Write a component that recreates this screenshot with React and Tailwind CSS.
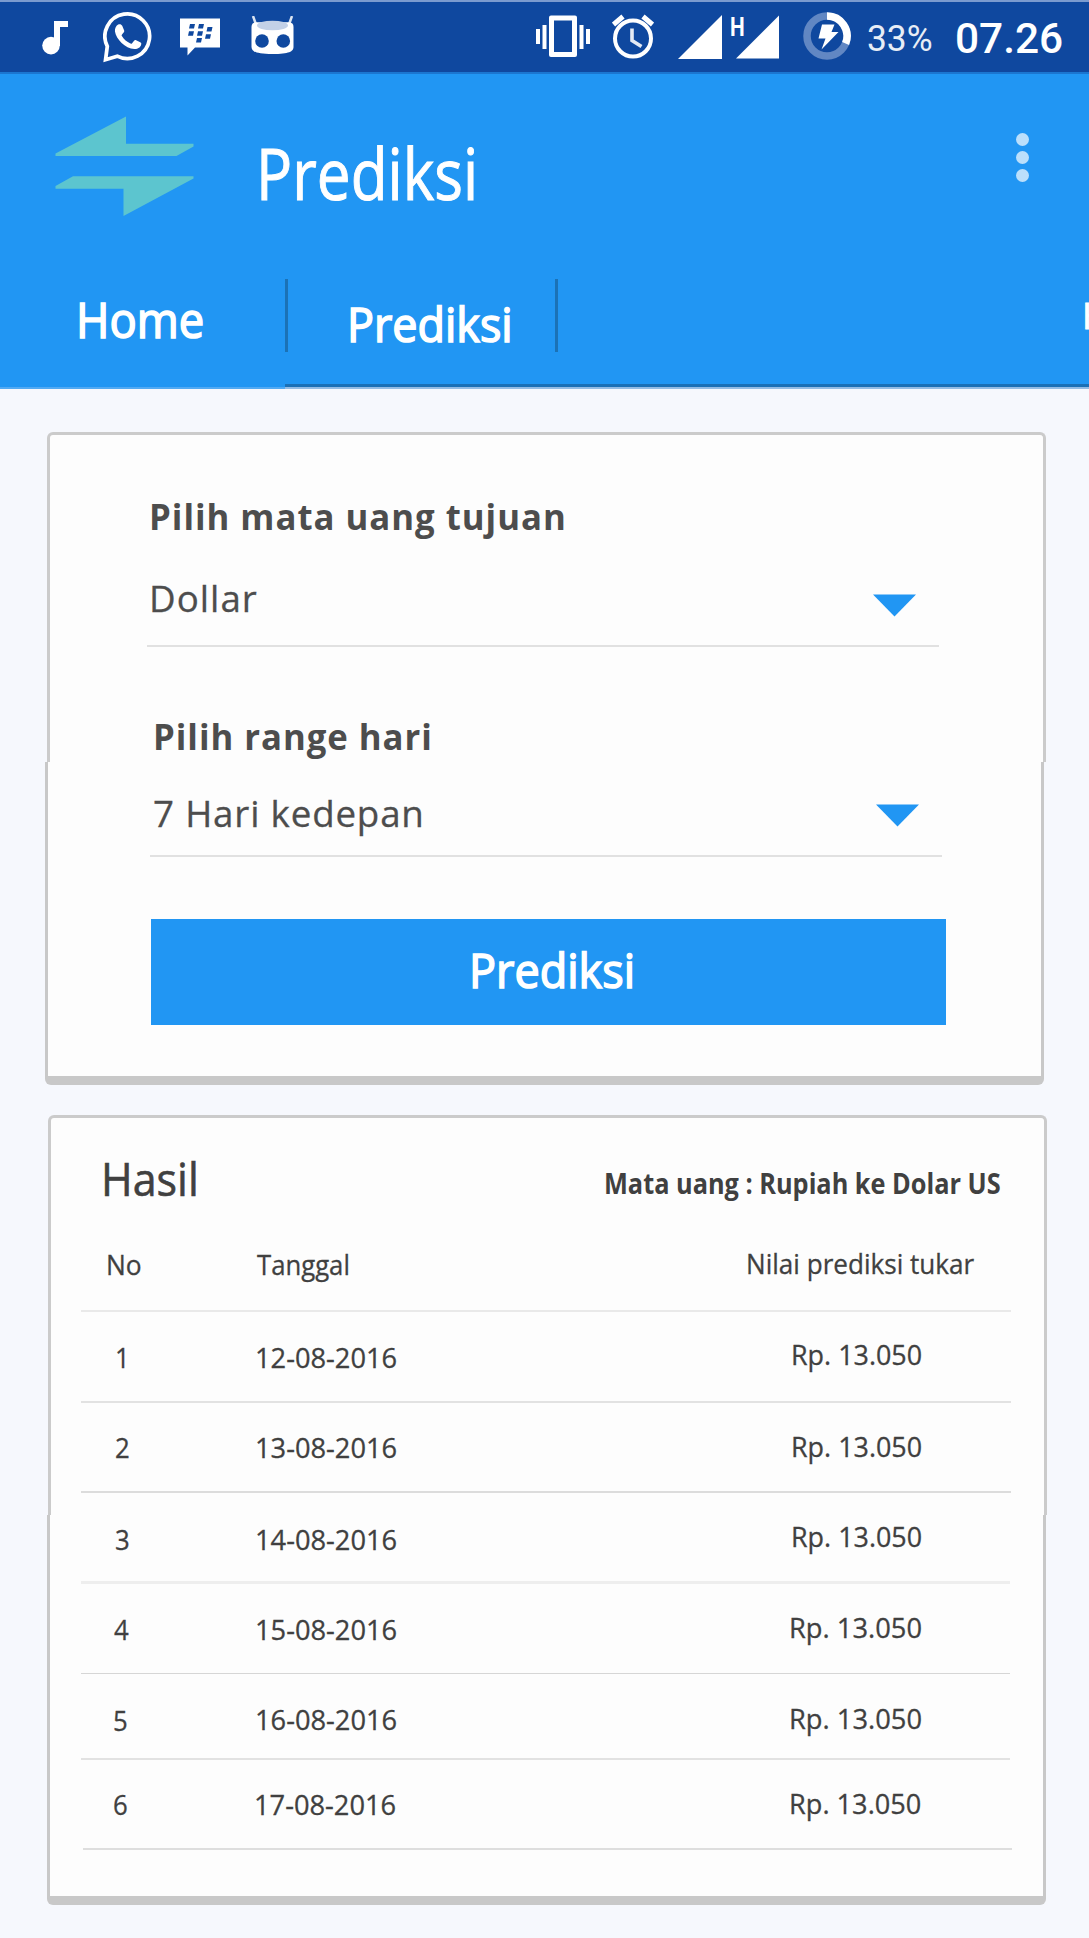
const rows = [
  { no: "1", date: "12-08-2016", row: "h-[91px] border-b-2 border-[#e2e2e2]", noCell: "mt-[31px]", dateCell: "mt-[31px]", price: "mt-[28px] scale-x-[0.961]" },
  { no: "2", date: "13-08-2016", row: "h-[90px] border-b-2 border-[#dcdcdc]", noCell: "mt-[30px]", dateCell: "mt-[30px]", price: "mt-[29px] scale-x-[0.961]" },
  { no: "3", date: "14-08-2016", row: "h-[69px] border-b-3 border-[#eeeeee]", noCell: "mt-[10px]", dateCell: "mt-[10px]", price: "mt-[7px] scale-x-[0.961]" },
  { no: "4", date: "15-08-2016", row: "h-[90px] border-b border-[#d6d6d6]", noCell: "mt-[31px] -ml-px", dateCell: "mt-[31px]", price: "mt-[29px] -ml-[2px] scale-x-[0.975]" },
  { no: "5", date: "16-08-2016", row: "h-[86px] border-b-2 border-[#e2e2e2]", noCell: "mt-[32px] -ml-[2px]", dateCell: "mt-[31px]", price: "mt-[30px] -ml-[2px] scale-x-[0.975]" },
  { no: "6", date: "17-08-2016", row: "h-[90px] ml-[2px] -mr-[2px] border-b-2 border-[#dedede]", noCell: "mt-[30px] -ml-[4px]", dateCell: "mt-[30px] -ml-[3px]", price: "mt-[29px] -ml-[4px] scale-x-[0.97]" },
];

function StatusBar() {
  return (
    <div className="flex h-[74px] items-start border-t-2 border-b-2 border-t-[#7b9bcf] border-b-[#1b76d0] bg-[#0f489f] text-white">
      <svg className="mt-[19px] ml-[42px] h-[34px] w-[26px] shrink-0" viewBox="0 0 26 34" fill="currentColor">
        <circle cx="9" cy="24.6" r="8.8" />
        <path d="M12 0H26V6H18V25H12Z" />
      </svg>
      <svg className="mt-[9px] ml-[35px] h-[52px] w-[49px] shrink-0" viewBox="0 0 50 52" fill="none">
        <path d="M4.4 35.5A22.8 22.8 0 1 1 14.5 45.6L2.6 49.2Z" stroke="white" strokeWidth="3.8" />
        <path d="M15.5 13.3C17 12.6 18.8 12.8 19.6 14.6L21.5 19C21.9 20 21.6 20.8 21 21.5L19.4 23.4C18.9 24 18.9 24.4 19.3 25.1C21.5 28.8 24.2 31 28 32.7C28.7 33 29.2 32.9 29.7 32.3L31.7 29.8C32.3 29.1 33 29 33.8 29.4L38 31.4C39 31.9 39.2 32.4 39 33.5C38.4 37 35.3 38.5 32 38.3C22.5 37.6 13.5 28.3 12.2 20.3C11.8 17.5 13.5 14.3 15.5 13.3Z" fill="white" />
      </svg>
      <svg className="mt-[16px] ml-[27px] h-[38px] w-[42px] shrink-0" viewBox="0 0 42 38">
        <path d="M1 0.5H41V29.5H16L8.5 37.5V29.5H1Z" fill="white" />
        <path d="M11 6H16L15 10.5H10ZM20 6H25L24 10.5H19ZM10 13.2H15L14 17.7H9ZM19 13.2H24L23 17.7H18ZM28.5 9H33.5L32.5 13.5H27.5ZM27 16.3H32L31 20.8H26ZM18 20H23L22 24.5H17Z" fill="#0f489f" />
      </svg>
      <svg className="mt-[14px] ml-[30px] h-[38px] w-[43px] shrink-0" viewBox="0 0 43 38">
        <path d="M2 0L5 8.5M41 0L38 8.5" stroke="#dbe4f1" strokeWidth="2.5" />
        <path d="M0.5 11C0.5 8 2 6.5 5 6.3H38C41 6.5 42.5 8 42.5 11V31C42.5 35.5 38 38 21.5 38S0.5 35.5 0.5 31Z" fill="white" />
        <ellipse cx="21.5" cy="9.5" rx="15.5" ry="4.8" fill="#c3d1e7" />
        <circle cx="11" cy="25" r="6.8" fill="#0f489f" />
        <circle cx="32.3" cy="25" r="6.8" fill="#0f489f" />
      </svg>
      <svg className="mt-[13px] ml-[241px] h-[43px] w-[56px] shrink-0" viewBox="0 0 56 43" fill="white">
        <path fillRule="evenodd" d="M16 0.5H40Q42 0.5 42 2.5V40Q42 42 40 42H16Q14 42 14 40V2.5Q14 0.5 16 0.5ZM19 5.5V37H37V5.5Z" />
        <rect x="1" y="14" width="4" height="15" />
        <rect x="7.5" y="10" width="4" height="24" />
        <rect x="44.5" y="10" width="4" height="24" />
        <rect x="51" y="14" width="4" height="15" />
      </svg>
      <svg className="mt-[12px] ml-[21px] h-[45px] w-[42px] shrink-0" viewBox="0 0 42 45" fill="none" stroke="white">
        <circle cx="21" cy="24.5" r="18" strokeWidth="4" />
        <path d="M1.5 10.5L11 2.5M40.5 10.5L31 2.5" strokeWidth="5" />
        <path d="M20 14.5V26.5L29.5 32.5" strokeWidth="3.6" stroke="#e4eaf4" />
      </svg>
      <svg className="mt-[13px] ml-[24px] h-[44px] w-[44px] shrink-0" viewBox="0 0 44 44" fill="white">
        <path d="M44 0V44H0Z" />
      </svg>
      <span className="mt-[15px] ml-[8px] w-[14px] shrink-0 origin-left scale-x-[0.8] font-[Roboto] text-[26px] leading-[20px] font-bold">H</span>
      <svg className="mt-[13px] -ml-[8px] h-[44px] w-[43px] shrink-0" viewBox="0 0 44 44" fill="white">
        <path d="M44 0V44H0Z" />
      </svg>
      <svg className="mt-[10px] ml-[24px] h-[48px] w-[48px] shrink-0" viewBox="0 0 48 48" fill="none">
        <circle cx="24" cy="24" r="20" stroke="#6187c3" strokeWidth="7.5" />
        <path d="M24 4A20 20 0 0 1 42.6 31.5" stroke="white" strokeWidth="7.5" />
        <path d="M19 12.5H31.5L28.5 20H35.5L18.5 37.5L22.5 26.5H15.5Z" fill="white" />
      </svg>
      <span className="mt-[18px] ml-[16px] w-[66px] shrink-0 origin-left scale-x-[0.955] font-[Roboto] text-[37px] leading-[37px] text-[#e7edf6]">33%</span>
      <span className="mt-[16px] ml-[22px] shrink-0 origin-left scale-x-[1.01] font-[Roboto] text-[42px] leading-[42px] font-medium">07.26</span>
    </div>
  );
}

function Header() {
  return (
    <header className="bg-[#2196f3] text-white">
      <div className="flex h-[205px] items-start">
        <svg className="mt-[42px] ml-[54px] h-[100px] w-[141px] shrink-0" viewBox="0 0 140 100" fill="#5cc5cf">
          <path d="M71.5 0.5V27.7H139V30.5L122 40H1V37.5Z" />
          <path d="M18.5 60.3H139V62.5L69 100V72.7H1V70Z" />
        </svg>
        <h1 className="mt-[63px] ml-[61px] w-[225px] shrink-0 origin-left scale-x-[0.848] text-[71px] leading-[71px] whitespace-nowrap [-webkit-text-stroke:1px_white]">Prediksi</h1>
        <div className="mt-[59px] ml-[535px] flex flex-col gap-[5.5px]">
          <span className="size-[12.7px] rounded-full bg-[#bbdffb]" />
          <span className="size-[12.7px] rounded-full bg-[#bbdffb]" />
          <span className="size-[12.7px] rounded-full bg-[#bbdffb]" />
        </div>
      </div>
      <nav className="flex h-[110px] items-start overflow-hidden">
        <div className="flex h-[110px] w-[285px] shrink-0 items-start border-b-2 border-[#52aaf3]">
          <span className="mt-[16px] ml-[76px] origin-left scale-x-[0.925] text-[49px] leading-[49px] [-webkit-text-stroke:1.6px_white]">Home</span>
        </div>
        <div className="flex h-[110px] w-[804px] shrink-0 items-start border-b-2 border-[#94bce4] shadow-[inset_0_-3px_0_#1b70b6]">
          <div className="h-[73px] w-[3px] shrink-0 bg-[#1b72b6]" />
          <span className="mt-[21px] ml-[59px] w-[164px] shrink-0 origin-left scale-x-[0.935] text-[48px] leading-[48px] [-webkit-text-stroke:1.6px_white]">Prediksi</span>
          <div className="ml-[44px] h-[73px] w-[3px] shrink-0 bg-[#1b72b6]" />
          <span className="mt-[17px] ml-[524px] shrink-0 text-[37px] leading-[37px] [-webkit-text-stroke:1px_white]">H</span>
        </div>
      </nav>
    </header>
  );
}

function Caret({ className }) {
  return (
    <svg className={className} viewBox="0 0 43 22" fill="#2196f3">
      <path d="M0 0H43L21.5 22Z" />
    </svg>
  );
}

function FormCard() {
  return (
    <section className="w-[999px] text-[#4d4d4d]">
      <div className="ml-[2px] flex h-[330px] w-[999px] flex-col rounded-t-[6px] border-x-3 border-t-3 border-[#cbcbcb] bg-[#fdfdfd] pl-[97px]">
        <label className="mt-[64px] ml-[2px] w-max origin-left scale-x-[0.966] text-[36px] leading-[36px] font-bold tracking-[1px] whitespace-nowrap">Pilih mata uang tujuan</label>
        <div className="mt-[46px] flex h-[66px] w-[792px] items-start border-b-2 border-[#e1e1e1]">
          <span className="w-[110px] shrink-0 origin-left scale-x-[1.02] pl-[2px] text-[36px] leading-[36px] tracking-[1px] [-webkit-text-stroke:0.3px_#4d4d4d]">Dollar</span>
          <Caret className="mt-[13px] ml-[616px] h-[23px] w-[43px] shrink-0" />
        </div>
        <label className="mt-[72px] ml-[6px] w-max origin-left scale-x-[0.965] text-[36px] leading-[36px] font-bold tracking-[1px] whitespace-nowrap">Pilih range hari</label>
      </div>
      <div className="flex h-[323px] w-[999px] flex-col rounded-b-[6px] border-x-3 border-b-9 border-[#c8c8c8] bg-[#fdfdfd] pl-[102px]">
        <div className="mt-[34px] flex h-[61px] w-[792px] items-start border-b-2 border-[#e1e1e1]">
          <span className="w-[280px] shrink-0 origin-left scale-x-[1.02] pl-[3px] text-[36px] leading-[36px] tracking-[0.8px] whitespace-nowrap [-webkit-text-stroke:0.3px_#4d4d4d]">7 Hari kedepan</span>
          <Caret className="mt-[8px] ml-[446px] h-[23px] w-[43px] shrink-0" />
        </div>
        <button className="mt-[62px] ml-[1px] flex h-[106px] w-[795px] items-start bg-[#2196f3] text-white">
          <span className="mt-[27px] ml-[318px] origin-left scale-x-[0.937] text-[48px] leading-[48px] [-webkit-text-stroke:1.6px_white]">Prediksi</span>
        </button>
      </div>
    </section>
  );
}

function Row({ item }) {
  return (
    <div className={`grid grid-cols-[139.5px_536.5px_1fr] items-start pl-[34px] text-[28px] leading-[28px] ${item.row}`}>
      <span className={`w-max origin-left scale-x-[0.92] ${item.noCell}`}>{item.no}</span>
      <span className={`w-max origin-left scale-x-[0.973] ${item.dateCell}`}>{item.date}</span>
      <span className={`w-max origin-left ${item.price}`}>Rp. 13.050</span>
    </div>
  );
}

function ResultCard() {
  return (
    <section className="mt-[30px] text-[#404040] [-webkit-text-stroke:0.3px_#404040]">
      <div className="ml-[3px] h-[400px] w-[999px] rounded-t-[6px] border-x-3 border-t-3 border-[#cbcbcb] bg-[#fdfdfd] pr-[33px] pl-[30px]">
        <div className="flex h-[97px] items-start whitespace-nowrap">
          <h2 className="mt-[37px] ml-[20px] w-[106px] shrink-0 origin-left scale-x-[0.935] text-[46px] leading-[46px] [-webkit-text-stroke:0.6px_#404040]">Hasil</h2>
          <p className="mt-[50px] ml-[397px] shrink-0 origin-left scale-x-[0.873] text-[29px] leading-[29px] font-bold [-webkit-text-stroke:0px]">Mata uang : Rupiah ke Dolar US</p>
        </div>
        <div className="grid h-[97px] grid-cols-[151px_489px_1fr] items-start border-b-2 border-[#e9e9e9] pl-[25px] text-[28px] leading-[28px] whitespace-nowrap">
          <span className="mt-[35px] w-max origin-left scale-x-[0.941]">No</span>
          <span className="mt-[35px] w-max origin-left scale-x-[0.918]">Tanggal</span>
          <span className="mt-[34px] w-max origin-left scale-x-[0.932]">Nilai prediksi tukar</span>
        </div>
        {rows.slice(0, 2).map((item) => (
          <Row key={item.no} item={item} />
        ))}
      </div>
      <div className="ml-[2px] h-[390px] w-[999px] rounded-b-[6px] border-x-3 border-b-9 border-[#c8c8c8] bg-[#fdfdfd] pr-[33px] pl-[31px]">
        {rows.slice(2).map((item) => (
          <Row key={item.no} item={item} />
        ))}
      </div>
    </section>
  );
}

export default function App() {
  return (
    <div className="h-[1938px] w-[1089px] overflow-hidden bg-[#f6f8fd] font-['Open_Sans',sans-serif]">
      <StatusBar />
      <Header />
      <main className="pt-[43px] pl-[45px]">
        <FormCard />
        <ResultCard />
      </main>
    </div>
  );
}
